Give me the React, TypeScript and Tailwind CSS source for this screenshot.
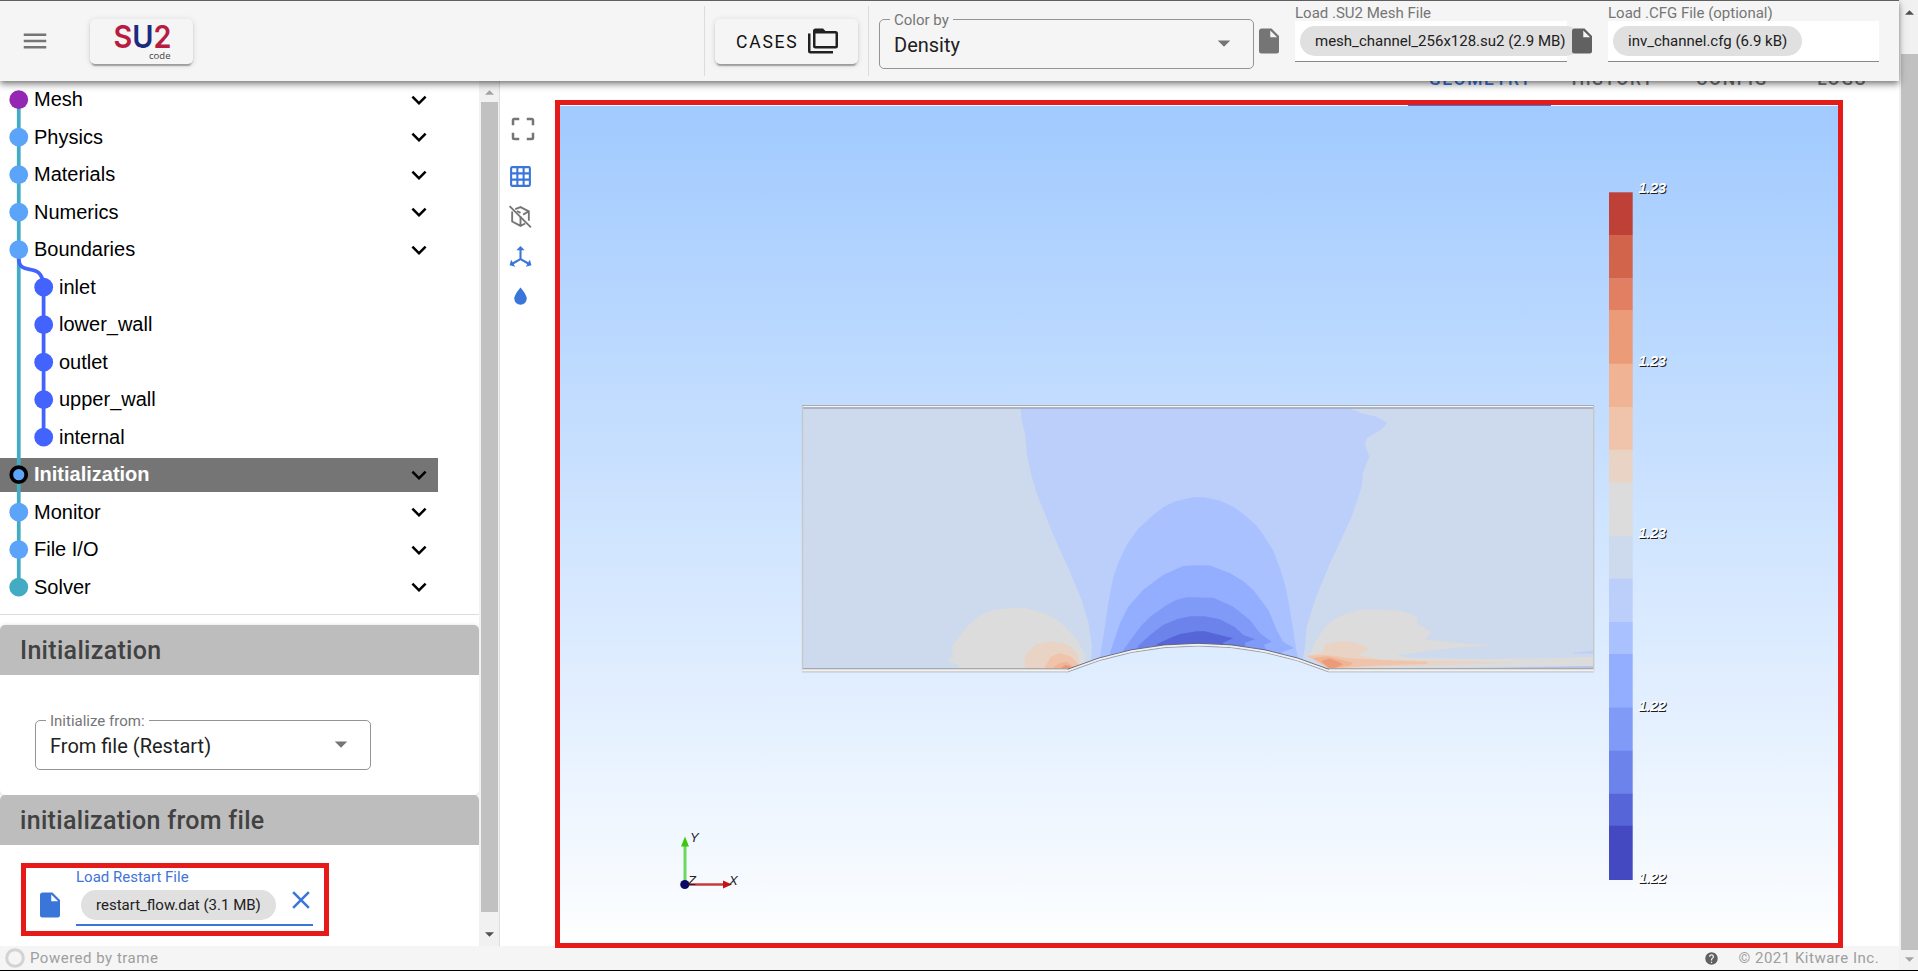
import React from "react";

const MDI = {
  menu: "M3,6H21V8H3V6M3,11H21V13H3V11M3,16H21V18H3V16Z",
  folders:
    "M22,4A2,2 0 0,1 24,6V16A2,2 0 0,1 22,18H6A2,2 0 0,1 4,16V4A2,2 0 0,1 6,2H12L14,4H22M2,6V20H20V22H2A2,2 0 0,1 0,20V11H0V6H2M6,6V16H22V6H6Z",
  file: "M13,9V3.5L18.5,9M6,2C4.89,2 4,2.89 4,4V20A2,2 0 0,0 6,22H18A2,2 0 0,0 20,20V8L14,2H6Z",
  close:
    "M19,6.41L17.59,5L12,10.59L6.41,5L5,6.41L10.59,12L5,17.59L6.41,19L12,13.41L17.59,19L19,17.59L13.41,12L19,6.41Z",
  chevron: "M7.41,8.58L12,13.17L16.59,8.58L18,10L12,16L6,10L7.41,8.58Z",
  caret: "M7,10L12,15L17,10H7Z",
  cropFree:
    "M19,3H15V5H19V9H21V5C21,3.89 20.1,3 19,3M19,19H15V21H19A2,2 0 0,0 21,19V15H19M5,15H3V19A2,2 0 0,0 5,21H9V19H5M3,5V9H5V5H9V3H5A2,2 0 0,0 3,5Z",
  grid: "M10,4V8H14V4H10M16,4V8H20V4H16M16,10V14H20V10H16M16,16V20H20V16H16M14,20V16H10V20H14M8,20V16H4V20H8M8,14V10H4V14H8M8,8V4H4V8H8M10,14H14V10H10V14M4,2H20A2,2 0 0,1 22,4V20A2,2 0 0,1 20,22H4C2.92,22 2,21.1 2,20V4A2,2 0 0,1 4,2Z",
  axis: "M12,2L16,6H13V13.85L19.53,17.61L21,15.03L22.5,20.5L17,21.96L18.53,19.35L12,15.58L5.47,19.35L7,21.96L1.5,20.5L3,15.03L4.47,17.61L11,13.85V6H8L12,2Z",
  water: "M12,20A6,6 0 0,1 6,14C6,10 12,3.25 12,3.25C12,3.25 18,10 18,14A6,6 0 0,1 12,20Z",
  help: "M15.07,11.25L14.17,12.17C13.45,12.89 13,13.5 13,15H11V14.5C11,13.39 11.45,12.39 12.17,11.67L13.41,10.41C13.78,10.05 14,9.55 14,9C14,7.89 13.1,7 12,7A2,2 0 0,0 10,9H8A4,4 0 0,1 12,5A4,4 0 0,1 16,9C16,9.88 15.64,10.67 15.07,11.25M13,19H11V17H13M12,2A10,10 0 0,0 2,12A10,10 0 0,0 12,22A10,10 0 0,0 22,12C22,6.47 17.5,2 12,2Z",
};

function Icon({ d, className }: { d: string; className: string }) {
  return (
    <svg viewBox="0 0 24 24" className={"block shrink-0 " + className}>
      <path d={d} fill="currentColor" />
    </svg>
  );
}

function OutlinedSelect({ label, value, className }: { label: string; value: string; className: string }) {
  return (
    <fieldset className={"h-[55px] min-w-0 rounded-[5px] border border-[#949494] pl-[10px] " + className}>
      <legend className="h-[11px] px-[4px] text-[15px] leading-[13px] text-[#757575]">{label}</legend>
      <div className="flex items-start justify-between pr-[14px] pl-[4px]">
        <span className="pt-[5px] text-[20px] leading-[30px] text-[#212121]">{value}</span>
        <Icon d={MDI.caret} className="mt-[3px] size-[30px] text-[#757575]" />
      </div>
    </fieldset>
  );
}

function ToolbarFile({ label, file, className, chip }: { label: string; file: string; className: string; chip: string }) {
  return (
    <div className={"flex flex-col pt-[4px] " + className}>
      <span className="h-[16px] text-[15px] leading-[16px] whitespace-nowrap text-[#757575]">{label}</span>
      <div className="flex h-[41px] items-start border-b border-[#8a8a8a] bg-white pt-[5px] pl-[5px]">
        <span className={"flex h-[30px] shrink-0 items-center rounded-full bg-[#e0e0e0] pl-[15px] text-[15px] whitespace-nowrap text-[#212121] " + chip}>
          {file}
        </span>
      </div>
    </div>
  );
}

const RAISED = "rounded-[5px] bg-[#f5f5f5] shadow-[0_4px_1px_-2px_rgba(0,0,0,0.2),0_2px_2px_0_rgba(0,0,0,0.14),0_1px_6px_0_rgba(0,0,0,0.12)]";

function Header() {
  return (
    <header className="relative z-20 flex h-[81px] w-[1899px] shrink-0 border-t border-[#5f5f5f] bg-[#f5f5f5] shadow-[0_2px_5px_-1px_rgba(0,0,0,0.4),0_5px_6px_0_rgba(0,0,0,0.2),0_1px_12px_0_rgba(0,0,0,0.12)]">
      <Icon d={MDI.menu} className="mt-[25px] ml-[20px] size-[30px] text-[#757575]" />
      <div className={"mt-[18px] ml-[40px] h-[45px] w-[103px] " + RAISED}>
        <svg viewBox="90 19 103 45" className="block h-[45px] w-[103px] overflow-visible">
          <text y="48.3" fontFamily="Inter, sans-serif" fontWeight="600" fontSize="31.5" textLength="58" lengthAdjust="spacingAndGlyphs" x="113.5">
            <tspan fill="#b81c40">S</tspan>
            <tspan fill="#1a2c80">U</tspan>
            <tspan fill="#b81c40">2</tspan>
          </text>
          <text x="149" y="59.3" fontFamily="'Open Sans', sans-serif" fontSize="9.8" fill="#444" textLength="21.5" lengthAdjust="spacingAndGlyphs">code</text>
        </svg>
      </div>
      <div className="mt-[5px] ml-[511px] h-[70px] w-px bg-[#dcdcdc]" />
      <div className={"mt-[18px] ml-[10px] flex h-[45px] w-[143px] items-center pl-[21px] " + RAISED}>
        <span className="w-[72px] pt-[1px] text-[17.5px] tracking-[1.8px] text-[#111]">CASES</span>
        <Icon d={MDI.folders} className="-mt-[2px] size-[30px] text-[#212121]" />
      </div>
      <div className="mt-[5px] ml-[10px] h-[70px] w-px bg-[#dcdcdc]" />
      <OutlinedSelect label="Color by" value="Density" className="mt-[13px] ml-[10px] w-[375px]" />
      <Icon d={MDI.file} className="mt-[25px] size-[30px] text-[#757575]" />
      <ToolbarFile label="Load .SU2 Mesh File" file="mesh_channel_256x128.su2 (2.9 MB)" className="ml-[11px] w-[272px]" chip="w-[281px]" />
      <Icon d={MDI.file} className="mt-[25px] size-[30px] text-[#616161]" />
      <ToolbarFile label="Load .CFG File (optional)" file="inv_channel.cfg (6.9 kB)" className="ml-[11px] w-[271px]" chip="w-[189px]" />
    </header>
  );
}

const TREE: { name: string; child?: boolean; active?: boolean; color: string }[] = [
  { name: "Mesh", color: "#9428b3" },
  { name: "Physics", color: "#5ca4fa" },
  { name: "Materials", color: "#5ca4fa" },
  { name: "Numerics", color: "#5ca4fa" },
  { name: "Boundaries", color: "#5ca4fa" },
  { name: "inlet", child: true, color: "#4363ff" },
  { name: "lower_wall", child: true, color: "#4363ff" },
  { name: "outlet", child: true, color: "#4363ff" },
  { name: "upper_wall", child: true, color: "#4363ff" },
  { name: "internal", child: true, color: "#4363ff" },
  { name: "Initialization", active: true, color: "#5ca4fa" },
  { name: "Monitor", color: "#5ca4fa" },
  { name: "File I/O", color: "#5ca4fa" },
  { name: "Solver", color: "#43abc2" },
];

function Tree() {
  return (
    <div className="relative h-[534px] border-b border-[#dedede]">
      <div className="font-['Liberation_Sans',Arial,sans-serif] text-[20px] text-black">
        {TREE.map((n) => (
          <div key={n.name} className="flex h-[37.5px] w-[438px] items-center">
            <div
              className={
                "flex h-[34px] w-full items-center justify-between pr-[4px] " +
                (n.active ? "bg-[#757575] font-bold text-white " : "") +
                (n.child ? "pl-[59px]" : "pl-[34px]")
              }
            >
              <span className="-mt-[1px]">{n.name}</span>
              {!n.child && <Icon d={MDI.chevron} className="size-[30px] text-black" />}
            </div>
          </div>
        ))}
      </div>
      <svg viewBox="0 0 60 533" className="pointer-events-none absolute top-0 left-0 h-[533px] w-[60px]">
        <path d="M18.75 18.7V506" stroke="#43abc2" strokeWidth="3.75" fill="none" />
        <path d="M18.75 168.7V178C19.5 197 42.8 178 43.6 206V356" stroke="#4363ff" strokeWidth="3.75" fill="none" />
        {TREE.map((n, i) =>
          n.active ? (
            <circle key={n.name} cx="18.75" cy={18.7 + i * 37.5} r="7.5" fill={n.color} stroke="#000" strokeWidth="3.75" />
          ) : (
            <circle key={n.name} cx={n.child ? 43.7 : 18.75} cy={18.7 + i * 37.5} r="9.4" fill={n.color} />
          ),
        )}
      </svg>
    </div>
  );
}

function CardTitle({ children }: { children: React.ReactNode }) {
  return (
    <div className="flex h-[50px] items-center rounded-t-[5px] bg-[#bdbdbd] pt-[2px] pl-[20px] text-[25px] font-medium tracking-[0.31px] text-[#424242]">
      {children}
    </div>
  );
}

function Sidebar() {
  return (
    <aside className="flex w-[500px] shrink-0 border-r border-[#dedede]">
      <div className="w-[479px] overflow-hidden">
        <Tree />
        <div className="mt-[10px] rounded-[5px] shadow-[0_1px_5px_rgba(0,0,0,0.2)]">
          <CardTitle>Initialization</CardTitle>
          <div className="h-[120px] pt-[40px] pl-[35px]">
            <OutlinedSelect label="Initialize from:" value="From file (Restart)" className="w-[336px]" />
          </div>
        </div>
        <CardTitle>initialization from file</CardTitle>
        <div className="mt-[18px] ml-[21px] flex h-[73px] w-[308px] border-[5px] border-[#e71a1a]">
          <Icon d={MDI.file} className="mt-[22px] ml-[9px] size-[30px] text-[#3a76da]" />
          <div className="ml-[11px] h-[58px] w-[237px] border-b-2 border-[#3a76da]">
            <div className="h-[22px] text-[15px] leading-[18px] text-[#3f74d9]">Load Restart File</div>
            <div className="flex">
              <span className="ml-[5px] flex h-[30px] w-[195px] shrink-0 items-center rounded-full bg-[#e0e0e0] pl-[15px] text-[15px] whitespace-nowrap text-[#212121]">
                restart_flow.dat (3.1 MB)
              </span>
              <Icon d={MDI.close} className="mt-[-5px] ml-[10px] size-[30px] text-[#3a76da]" />
            </div>
          </div>
        </div>
      </div>
      <div className="flex w-[20px] flex-col items-center bg-[#f1f1f1] pt-[9px]">
        <svg viewBox="0 0 10 5" className="h-[5px] w-[9px]"><path d="M5 0L10 5H0Z" fill="#a3a3a3" /></svg>
        <div className="mt-[7px] h-[810px] w-[17px] bg-[#c1c1c1]" />
        <svg viewBox="0 0 10 5" className="mt-[20px] h-[5px] w-[9px]"><path d="M0 0H10L5 5Z" fill="#505050" /></svg>
      </div>
    </aside>
  );
}

function ViewTools() {
  return (
    <div className="flex w-[55px] shrink-0 flex-col items-start pt-[33px] pl-[7.5px]">
      <Icon d={MDI.cropFree} className="size-[30px] text-[#757575]" />
      <div className="mt-[20px] flex flex-col gap-[15px] text-[#3a76da]">
        <Icon d={MDI.grid} className="size-[25px]" />
        <svg viewBox="0 0 24 24" className="block size-[25px]" fill="none" stroke="#757575" strokeWidth="1.8">
          <path d="M7 5L12 3L20 7V16M16.5 18.7L12 21L4 16.8V7.2M12 12V21M8.5 6.7L12 8.5M20 7L14.5 10.2" />
          <path d="M1.5 2L22 22.5" />
        </svg>
        <Icon d={MDI.axis} className="size-[25px]" />
        <Icon d={MDI.water} className="size-[25px]" />
      </div>
    </div>
  );
}

const BANDS: [number, number, string][] = [
  [192.3, 235, "#be4036"],
  [235, 278.3, "#d3644c"],
  [278.3, 310, "#e27f62"],
  [310, 363.7, "#eb9b78"],
  [363.7, 407, "#f0b393"],
  [407, 449.7, "#f0c4ab"],
  [449.7, 482.3, "#e9d3c5"],
  [482.3, 536, "#dcdcdc"],
  [536, 578.7, "#cdd9ec"],
  [578.7, 622, "#bccffa"],
  [622, 654, "#a9c1ff"],
  [654, 707.7, "#93adff"],
  [707.7, 750.7, "#809af8"],
  [750.7, 793.7, "#6c83eb"],
  [793.7, 825.7, "#5666d8"],
  [825.7, 879.7, "#4449c2"],
];

const LABELS: [number, string][] = [
  [193.3, "1.23"],
  [366, "1.23"],
  [538.3, "1.23"],
  [711.5, "1.22"],
  [883, "1.22"],
];

const CONTOURS: [string, string][] = [
  ["#bccffa", "1020.7,408 1021.7,421.7 1025,433 1027.3,456.7 1031,474 1036.7,493.3 1053.3,535 1068.3,568.3 1081.7,600 1088.3,621.7 1092,646.7 1090,675 1300,675 1305,646.7 1306.7,626.7 1315,600 1330,563.3 1351.7,516.7 1361.7,486.7 1362.7,473.3 1369.3,456.7 1365,445 1366.7,438.3 1381.7,429.3 1387.3,422.7 1376.7,416.7 1361.7,413.3 1349.3,408"],
  ["#a9c1ff", "1098,675 1100,656.7 1103.3,636.7 1108.3,603.3 1113.3,576.7 1119,561 1126.7,545 1138,529 1153.3,515 1165,506 1176.7,501 1193.3,497.3 1205,497.3 1220,500.7 1234,507 1246.7,516.7 1256,525 1263.3,535 1273,550 1280,568.3 1285,585 1288.3,600 1293.3,630 1296,648 1302,675"],
  ["#93adff", "1108,675 1110,653 1115,638 1120,623 1128.3,606.7 1143,590 1163,575 1183,566 1197,565.3 1210,565.5 1230,573.3 1243,581 1253.3,590 1268.3,610 1276.7,630 1283,641.7 1294,648 1282,652 1285,675"],
  ["#809af8", "1118,675 1123.3,650 1133,636.7 1141,626 1150,616.7 1166.7,605 1176,600 1186.7,597.3 1213.3,597.7 1233.3,606.7 1250,620 1260,633.3 1271.7,641.7 1264,645 1275,675"],
  ["#6c83eb", "1130,675 1138,646 1150,635 1163,625 1176.7,619.3 1190,616.3 1205,616.3 1220,619.3 1235,627.3 1243.3,635 1255,639.3 1245,642.7 1250,675"],
  ["#5666d8", "1150,675 1157,644 1170,638 1180,634 1196.7,631.3 1205,631.3 1220,635 1233.3,638.3 1223,642.7 1230,675"],
  ["#dcdcdc", "960,675 958,665 946.7,660.7 953,656.7 951.7,646.7 958,638 966.7,626.7 983,613.3 994,610 1006.7,608.3 1026.7,608.3 1046.7,614.3 1057,620 1066.7,628.3 1078.3,641.7 1085,655 1085,675"],
  ["#e9d3c5", "1025,675 1024.5,660 1026.7,653 1036.7,644.3 1051.7,641 1066.7,644 1073,649 1078,655 1081,675"],
  ["#f0c4ab", "1045,675 1045,667 1050.7,656.7 1060,653 1071.7,656.7 1078,664 1078,675"],
  ["#f0b393", "1053,675 1054,667 1060,663 1067,662 1074,667 1074,675"],
  ["#e9977b", "1060,675 1061,668 1065,665 1070,666 1073,675"],
  ["#dcdcdc", "1306,655 1312,652 1315,641.7 1326.7,625 1336,618 1346.7,613.3 1358,610.5 1370,609.3 1393.3,610 1406,612 1416.7,616.7 1417.3,623.3 1431.7,632.3 1425,639.3 1456.7,642.7 1493.3,645.3 1456.7,647.7 1430,650.7 1396.7,655 1410,657.7 1480,658.7 1567,658 1580,656.7 1595,656.7 1595,666 1470,666.7 1329,669"],
  ["#e9d3c5", "1304,654 1312,655 1323,651.7 1325,645 1333,642 1343,641 1352,642 1360,644 1369.3,649 1358,655 1380,659.3 1516.7,662.7 1446.7,665 1330,668"],
  ["#f0c4ab", "1307,656 1323,655 1335,656 1346.7,658 1382,660 1427,661.7 1427,664 1375,665.5 1330,669"],
  ["#f0b393", "1313,658 1328,656.5 1342,660 1353,663 1350,665.5 1330,669"],
  ["#eb9b78", "1321,661 1330,658.5 1339,662 1343,664.5 1336,667.5 1330,669"],
  ["#bccffa", "1573,652.8 1594,650.8 1594,653.5 1573,653.5"],
  ["#b4c4e8", "1478,668 1594,666 1594,669 1478,669"],
];

const DOMAIN = "M802.5 408H1593.5V669.5H1329Q1266 644 1198 644Q1130 644 1067.5 669.5H802.5Z";

function Scene() {
  return (
    <svg viewBox="560 106 1278 837" className="block h-[837px] w-[1278px]">
      <defs>
        <linearGradient id="sky" x1="0" y1="0" x2="0" y2="1">
          <stop offset="0" stopColor="#a1caff" />
          <stop offset="1" stopColor="#fdfeff" />
        </linearGradient>
        <clipPath id="domain"><path d={DOMAIN} /></clipPath>
      </defs>
      <rect x="560" y="106" width="1278" height="837" fill="url(#sky)" />
      <g clipPath="url(#domain)">
        <path d={DOMAIN} fill="#cdd9ec" />
        {CONTOURS.map(([fill, points], i) => (
          <polygon key={i} points={points} fill={fill} />
        ))}
      </g>
      <path d="M802 405.5H1594" stroke="#a9adb3" strokeWidth="1" />
      <path d="M802 406.6H1594" stroke="#f4f4f2" strokeWidth="1.4" />
      <path d="M802.5 408H1593.5" stroke="#9fa5b3" strokeWidth="1.7" />
      <path d="M802.5 406V671M1593.7 406V671" stroke="#c6c8c8" strokeWidth="1.4" />
      <path d="M803 668.8H1067M1329 668.8H1593" stroke="#a5a8ae" strokeWidth="1.4" />
      <path d="M802 671.7H1067.5M1329 671.7H1594" stroke="#9d9f9f" strokeWidth="1.1" />
      <path d="M1067.5 672Q1130 646 1198 646T1329 672" fill="none" stroke="#9a9a9a" strokeWidth="0.9" />
      <path d="M802 670.4H1067.5Q1130 644.6 1198 644.6T1329 670.4H1594" fill="none" stroke="#f5f2ee" strokeWidth="2" />
      <path d="M1067.5 669.3Q1130 643.3 1198 643.3T1329 669.3" fill="none" stroke="#5a5f7c" strokeWidth="0.9" />
      {BANDS.map(([y0, y1, fill]) => (
        <rect key={fill} x="1609" y={y0} width="23.7" height={y1 - y0 + 0.3} fill={fill} />
      ))}
      <g fontFamily="'Liberation Sans', Arial, sans-serif" fontStyle="italic" fontWeight="bold" fontSize="14.5">
        {LABELS.map(([y, t]) => (
          <text key={y} x="1638.5" y={y - 0.3} fill="#ffffff" textLength="27.5" className="[text-shadow:1px_1px_0_#1c1c1c]">{t}</text>
        ))}
      </g>
      <path d="M685 884V845" stroke="#6bd95c" strokeWidth="3" />
      <path d="M685 836.5L689 846.5H681Z" fill="#3cc80f" />
      <path d="M687 884.5H724" stroke="#c43c3c" strokeWidth="2.4" />
      <path d="M732 884.5L723 880.5V888.5Z" fill="#c41414" />
      <circle cx="684.8" cy="884.5" r="4.6" fill="#0a0a66" />
      <g fontFamily="'Liberation Sans', Arial, sans-serif" fontStyle="italic" fontSize="13" fill="#222">
        <text x="690" y="842">Y</text>
        <text x="729" y="884.5">X</text>
        <text x="688" y="884.5">Z</text>
      </g>
    </svg>
  );
}

function Tab({ className, children }: { className: string; children: React.ReactNode }) {
  return <span className={"text-center tracking-[1.56px] " + className}>{children}</span>;
}

export default function App() {
  return (
    <div className="flex h-[971px] w-[1918px] overflow-hidden border-b border-black bg-white font-[Roboto,sans-serif]">
      <div className="flex w-[1899px] shrink-0 flex-col">
        <Header />
        <div className="flex h-[865px] shrink-0">
          <Sidebar />
          <ViewTools />
          <main className="z-10 flex w-[1288px] shrink-0 flex-col">
            <div className="flex h-[19px] shrink-0 justify-end overflow-visible text-[17.5px] leading-[20px] font-medium text-[#757575]">
              <div className="-mt-[12.5px] -mr-[51px] flex h-[20px]">
                <Tab className="w-[143px] text-[#3a76da]">GEOMETRY</Tab>
                <Tab className="w-[122px]">HISTORY</Tab>
                <Tab className="w-[116px]">CONFIG</Tab>
                <Tab className="w-[104px]">LOGS</Tab>
              </div>
            </div>
            <div className="flex h-[848px] shrink-0 flex-col border-[5px] border-[#e71a1a]">
              <div className="h-px shrink-0 bg-white pl-[848px]">
                <div className="h-px w-[143px] bg-[#3a76da]" />
              </div>
              <Scene />
            </div>
          </main>
        </div>
        <footer className="flex h-[24px] shrink-0 items-center bg-[#f5f5f5] text-[15px] tracking-[0.5px] text-[#9e9e9e]">
          <svg viewBox="0 0 20 20" className="ml-[5px] size-[20px]"><circle cx="10" cy="10" r="8.3" fill="none" stroke="#d3d3d3" strokeWidth="3" /></svg>
          <span className="ml-[5px]">Powered by trame</span>
          <Icon d={MDI.help} className="ml-auto size-[15px] text-[#616161]" />
          <span className="ml-[20px] w-[160.5px]">© 2021 Kitware Inc.</span>
        </footer>
      </div>
      <div className="flex w-[19px] flex-col items-center bg-[#f1f1f1] pt-[10px] pl-[2px]">
        <svg viewBox="0 0 10 5" className="h-[5px] w-[9px] shrink-0"><path d="M5 0L10 5H0Z" fill="#505050" /></svg>
        <div className="mt-[39px] h-[896px] w-[17px] shrink-0 bg-[#c1c1c1]" />
        <svg viewBox="0 0 10 5" className="mt-[7px] h-[5px] w-[9px] shrink-0"><path d="M0 0H10L5 5Z" fill="#a3a3a3" /></svg>
      </div>
    </div>
  );
}
